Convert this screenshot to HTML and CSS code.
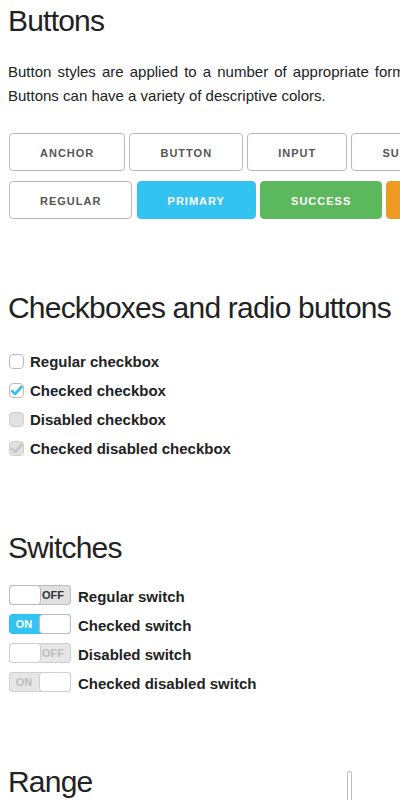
FILE: index.html
```html
<!DOCTYPE html>
<html lang="en">
<head>
<meta charset="utf-8">
<title>Elements</title>
<link rel="stylesheet" href="styles.css">
</head>
<body>
<div class="page">
  <section class="sec">
    <h3 class="title">Buttons</h3>
    <p class="lead">Button styles are applied to a number of appropriate form elements. Buttons can have a variety of descriptive colors.</p>
    <div class="btn-row"><a class="button" href="#">Anchor</a> <a class="button" href="#">Button</a> <a class="button" href="#">Input</a> <a class="button" href="#">Submit</a></div>
    <div class="btn-row"><a class="button" href="#">Regular</a> <a class="button primary" href="#">Primary</a> <a class="button success" href="#">Success</a> <a class="button warning" href="#">Warning</a> <a class="button danger" href="#">Danger</a></div>
  </section>

  <section class="sec sec-checks">
    <h3 class="title title-checks">Checkboxes and radio buttons</h3>
    <div class="opts">
      <label class="opt"><span class="cbox"></span>Regular checkbox</label>
      <label class="opt"><span class="cbox"><svg viewBox="1 1 13 13" width="13" height="13"><polyline class="tick" points="3,8 6,11 12.5,4"/></svg></span>Checked checkbox</label>
      <label class="opt"><span class="cbox disabled"></span>Disabled checkbox</label>
      <label class="opt"><span class="cbox disabled"><svg viewBox="1 1 13 13" width="13" height="13"><polyline class="tick tick-off" points="3,8 6,11 12.5,4"/></svg></span>Checked disabled checkbox</label>
    </div>
  </section>

  <section class="sec sec-switches">
    <h3 class="title title-switches">Switches</h3>
    <div class="opts">
      <label class="opt"><span class="switch"><span class="sw-knob"></span><span class="sw-off">OFF</span></span>Regular switch</label>
      <label class="opt"><span class="switch on"><span class="sw-on">ON</span><span class="sw-knob"></span></span>Checked switch</label>
      <label class="opt"><span class="switch disabled"><span class="sw-knob"></span><span class="sw-off">OFF</span></span>Disabled switch</label>
      <label class="opt"><span class="switch on disabled"><span class="sw-on">ON</span><span class="sw-knob"></span></span>Checked disabled switch</label>
    </div>
  </section>

  <section class="sec sec-range">
    <div class="range-row">
      <h3 class="title">Range</h3>
      <span class="vrange"></span>
    </div>
  </section>
</div>
</body>
</html>
```

FILE: styles.css
```css
html, body {
  margin: 0;
  padding: 0;
}
body {
  overflow: hidden;
  background: #fff;
  color: #222;
  font-family: "Liberation Sans", Arial, Helvetica, sans-serif;
  font-size: 15px;
  line-height: 24px;
}
.page {
  width: 468px;
  padding: 1px 8px 0;
}
.title {
  margin: 0 0 20px;
  font-size: 30px;
  line-height: 39px;
  font-weight: 300;
  letter-spacing: -0.8px;
  color: #222;
}
.lead {
  margin: 0 0 25px;
  text-align: justify;
}

/* buttons */
.btn-row {
  white-space: nowrap;
  padding-left: 1px;
}
.button {
  display: inline-block;
  box-sizing: border-box;
  height: 38px;
  padding: 0 30px;
  margin-bottom: 10px;
  border: 1px solid #bbb;
  border-radius: 4px;
  background: transparent;
  color: #555;
  font-size: 11px;
  font-weight: 600;
  line-height: 38px;
  letter-spacing: 1px;
  text-transform: uppercase;
  text-decoration: none;
  text-align: center;
  white-space: nowrap;
}
.button.primary { background: #33c3f0; border-color: #33c3f0; color: #fff; }
.button.success { background: #5cb85c; border-color: #5cb85c; color: #fff; }
.button.warning { background: #ec9a23; border-color: #ec9a23; color: #fff; }
.button.danger  { background: #d9534f; border-color: #d9534f; color: #fff; }

/* sections */
.sec-checks { margin-top: 59px; }
.title-checks { margin-bottom: 23px; }
.sec-switches { margin-top: 67px; }
.title-switches { margin-bottom: 18px; }
.sec-range { margin-top: 66px; }

.opts {
  display: flex;
  flex-direction: column;
  gap: 5px;
}
.opt {
  display: flex;
  align-items: flex-start;
  font-weight: 700;
  color: #222;
}

/* checkboxes */
.cbox {
  box-sizing: border-box;
  width: 15px;
  height: 15px;
  margin: 4px 6px 0 1px;
  border: 1px solid #bbb;
  border-radius: 4px;
  background: #fff;
  display: flex;
}
.cbox.disabled {
  background: #e1e1e1;
  border-color: #cfcfcf;
}
.tick {
  fill: none;
  stroke: #33c3f0;
  stroke-width: 2.6;
  stroke-linecap: round;
  stroke-linejoin: round;
}
.tick.tick-off { stroke: #c6c6c6; }

/* switches */
.switch {
  display: flex;
  flex: none;
  box-sizing: border-box;
  width: 62px;
  height: 20px;
  margin: 0 7px 0 1px;
  border-radius: 4px;
  background: #e1e1e1;
  box-shadow: inset 0 0 0 1px #bbb;
  overflow: hidden;
  font-size: 11px;
  font-weight: 700;
  line-height: 20px;
  letter-spacing: 0;
}
.sw-knob {
  flex: none;
  box-sizing: border-box;
  width: 32px;
  height: 20px;
  background: #fff;
  border: 1px solid #bbb;
  border-radius: 4px;
}
.sw-off {
  flex: 1;
  padding-left: 1px;
  color: #333;
}
.sw-on {
  flex: 1;
  text-align: center;
  color: #fff;
}
.switch.on {
  background: #33c3f0;
  box-shadow: none;
}
.switch.disabled {
  background: #e6e6e6;
  box-shadow: inset 0 0 0 1px #cfcfcf;
}
.switch.disabled .sw-knob { border-color: #cfcfcf; }
.switch.disabled .sw-off,
.switch.disabled .sw-on { color: #bdbdbd; }

/* range */
.range-row {
  display: grid;
  grid-template-columns: 339px 5px;
  align-items: start;
}
.vrange {
  box-sizing: border-box;
  width: 5px;
  height: 100px;
  margin-top: 9px;
  border: 1px solid #bbb;
  border-radius: 3px;
  background: #fff;
}
```
